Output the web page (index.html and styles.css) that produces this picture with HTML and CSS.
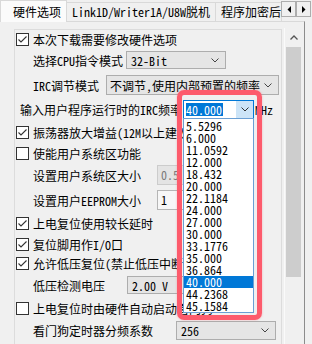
FILE: index.html
```html
<!DOCTYPE html>
<html>
<head>
    <meta charset="utf-8">
    <title>硬件选项</title>
    <link rel="stylesheet" href="styles.css">
</head>
<body>
  <div class="tabs">
    <div class="tab active">硬件选项</div>
    <div class="tab t2">Link1D/Writer1A/U8W脱机</div>
    <div class="tab t3">程序加密后</div>
    <div class="tab-arrows">
      <span class="arr"><svg width="4" height="7"><polygon points="4,0 4,7 0.5,3.5" fill="#000"/></svg></span>
      <span class="arr"><svg width="4" height="7"><polygon points="0,0 0,7 3.5,3.5" fill="#000"/></svg></span>
    </div>
  </div>

  <div class="panel">
    <div class="content">
      <div class="group">
        <div class="row h18">
          <span class="cb"><svg width="13" height="13"><rect x="0.5" y="0.5" width="12" height="12" fill="#fff" stroke="#333"/><polyline points="2.5,6.5 5,9 10.5,3.5" fill="none" stroke="#333" stroke-width="1.1"/></svg></span>本次下载需要修改硬件选项
        </div>
        <div class="row h24 ind">
          <span class="lbl w93">选择CPU指令模式</span>
          <span class="sel cpu">32-Bit<svg class="chev" width="8" height="5"><polyline points="0.5,0.5 4,4 7.5,0.5" fill="none" stroke="#444"/></svg></span>
        </div>
        <div class="row h26 ind">
          <span class="lbl w73">IRC调节模式</span>
          <span class="sel irc">不调节,使用内部预置的频率<svg class="chev" width="8" height="5"><polyline points="0.5,0.5 4,4 7.5,0.5" fill="none" stroke="#444"/></svg></span>
        </div>
        <div class="row h22 ind2">
          <span class="lbl w163">输入用户程序运行时的IRC频率</span>
          <span class="combo"><span class="hl">40.000</span><span class="combo-btn"><svg width="8" height="5"><polyline points="0.5,0.5 4,4 7.5,0.5" fill="none" stroke="#333"/></svg></span></span>
          <span class="unit">MHz</span>
        </div>
        <div class="row h24">
          <span class="cb"><svg width="13" height="13"><rect x="0.5" y="0.5" width="12" height="12" fill="#fff" stroke="#333"/><polyline points="2.5,6.5 5,9 10.5,3.5" fill="none" stroke="#333" stroke-width="1.1"/></svg></span>振荡器放大增益(12M以上建议选择)
        </div>
        <div class="row h18">
          <span class="cb"><svg width="13" height="13"><rect x="0.5" y="0.5" width="12" height="12" fill="#fff" stroke="#333"/></svg></span>使能用户系统区功能
        </div>
        <div class="row h26 ind">
          <span class="lbl w124">设置用户系统区大小</span>
          <span class="field off">0.5</span>
        </div>
        <div class="row h24 ind">
          <span class="lbl w124">设置用户EEPROM大小</span>
          <span class="field">1</span>
        </div>
        <div class="row h23">
          <span class="cb"><svg width="13" height="13"><rect x="0.5" y="0.5" width="12" height="12" fill="#fff" stroke="#333"/><polyline points="2.5,6.5 5,9 10.5,3.5" fill="none" stroke="#333" stroke-width="1.1"/></svg></span>上电复位使用较长延时
        </div>
        <div class="row h18">
          <span class="cb"><svg width="13" height="13"><rect x="0.5" y="0.5" width="12" height="12" fill="#fff" stroke="#333"/><polyline points="2.5,6.5 5,9 10.5,3.5" fill="none" stroke="#333" stroke-width="1.1"/></svg></span>复位脚用作I/O口
        </div>
        <div class="row h20">
          <span class="cb"><svg width="13" height="13"><rect x="0.5" y="0.5" width="12" height="12" fill="#fff" stroke="#333"/><polyline points="2.5,6.5 5,9 10.5,3.5" fill="none" stroke="#333" stroke-width="1.1"/></svg></span>允许低压复位(禁止低压中断)
        </div>
        <div class="row h24 ind">
          <span class="lbl w94">低压检测电压</span>
          <span class="sel lvd">2.00 V<svg class="chev" width="8" height="5"><polyline points="0.5,0.5 4,4 7.5,0.5" fill="none" stroke="#444"/></svg></span>
        </div>
        <div class="row h23">
          <span class="cb"><svg width="13" height="13"><rect x="0.5" y="0.5" width="12" height="12" fill="#fff" stroke="#333"/></svg></span>上电复位时由硬件自动启动看门狗
        </div>
        <div class="row h20 ind">
          <span class="lbl w143">看门狗定时器分频系数</span>
          <span class="sel wdt">256<svg class="chev" width="8" height="5"><polyline points="0.5,0.5 4,4 7.5,0.5" fill="none" stroke="#444"/></svg></span>
        </div>
      </div>
    </div>
    <div class="scrollbar">
      <div class="sb-up"><svg width="8" height="5"><polyline points="0.5,4.5 4,1 7.5,4.5" fill="none" stroke="#555" stroke-width="1.3"/></svg></div>
      <div class="sb-thumb"></div>
    </div>
  </div>

  <!-- opened dropdown of the IRC frequency box -->
  <div class="droplist">
    <div class="item">5.5296</div>
    <div class="item">6.000</div>
    <div class="item">11.0592</div>
    <div class="item">12.000</div>
    <div class="item">18.432</div>
    <div class="item">20.000</div>
    <div class="item">22.1184</div>
    <div class="item">24.000</div>
    <div class="item">27.000</div>
    <div class="item">30.000</div>
    <div class="item">33.1776</div>
    <div class="item">35.000</div>
    <div class="item">36.864</div>
    <div class="item picked">40.000</div>
    <div class="item">44.2368</div>
    <div class="item">45.1584</div>
  </div>
  <div class="mark"></div>
</body>
</html>
```

FILE: styles.css
```css
body {
    margin: 0;
    width: 312px;
    height: 344px;
    overflow: hidden;
    position: relative;
    background: #f0f0f0;
    font-family: "Noto Sans Mono CJK SC", "Noto Sans CJK SC", sans-serif;
    font-size: 12px;
    color: #000;
}

/* tab strip */
.tabs {
    display: flex;
    height: 21px;
    position: relative;
}

.tab {
    box-sizing: border-box;
    height: 19px;
    margin-top: 2px;
    border: 1px solid #d9d9d9;
    border-bottom: none;
    line-height: 18px;
    white-space: nowrap;
    overflow: hidden;
    background: #f0f0f0;
}

.tab.active {
    width: 67px;
    height: 22px;
    margin-top: 0;
    padding-left: 12px;
    line-height: 22px;
    background: #fbfbfb;
    position: relative;
    z-index: 1;
}

.tab.t2 {
    width: 149px;
    padding-left: 5px;
    border-left: none;
}

.tab.t3 {
    width: 66px;
    padding-left: 5px;
    border-left: none;
}

.tab-arrows {
    position: absolute;
    right: 1px;
    top: 1px;
    display: flex;
}

.arr {
    box-sizing: border-box;
    width: 15px;
    height: 16px;
    border: 1px solid #adadad;
    background: #f0f0f0;
    display: flex;
    align-items: center;
    justify-content: center;
}

/* page */
.panel {
    display: flex;
    width: 305px;
    height: 323px;
    box-sizing: border-box;
    border-top: 1px solid #d9d9d9;
    border-right: 1px solid #8c8c8c;
}

.content {
    width: 284px;
    padding-top: 7px;
    flex: none;
}

.group {
    box-sizing: border-box;
    width: 268px;
    height: 330px;
    margin-left: 14px;
    padding-left: 1px;
    border: 1px solid #dcdcdc;
    overflow: hidden;
}

.row {
    display: flex;
    align-items: center;
    white-space: nowrap;
}

.h18 { height: 18px; }
.h20 { height: 20px; }
.h22 { height: 22px; }
.h23 { height: 23px; }
.h24 { height: 24px; }
.h26 { height: 26px; }

.ind { padding-left: 17px; }
.ind2 { padding-left: 4px; }

.cb {
    width: 13px;
    height: 13px;
    margin-right: 4px;
    flex: none;
    display: flex;
}

.lbl { flex: none; }
.w73 { width: 73px; }
.w93 { width: 93px; }
.w94 { width: 94px; }
.w124 { width: 124px; }
.w143 { width: 143px; }
.w163 { width: 163px; }

.sel {
    box-sizing: border-box;
    display: flex;
    align-items: center;
    justify-content: space-between;
    padding: 0 6px 0 4px;
    background: #e5e5e5;
    border: 1px solid #adadad;
    flex: none;
}

.sel.cpu { width: 100px; height: 18px; }
.sel.irc { width: 173px; height: 20px; padding-left: 3px; }
.sel.lvd { width: 80px; height: 18px; }
.sel.wdt { width: 100px; height: 19px; }

.combo {
    box-sizing: border-box;
    width: 71px;
    height: 19px;
    display: flex;
    align-items: center;
    padding-left: 2px;
    background: #fff;
    border: 1px solid #0078d7;
    flex: none;
}

.hl {
    background: #0078d7;
    color: #fff;
    line-height: 13px;
    padding-right: 1px;
}

.combo-btn {
    margin-left: auto;
    width: 17px;
    height: 17px;
    display: flex;
    align-items: center;
    justify-content: center;
    background: #cce4f7;
}

.unit { margin-left: 1px; }

.field {
    box-sizing: border-box;
    width: 70px;
    height: 20px;
    padding-left: 3px;
    line-height: 18px;
    border: 1px solid #b5b5b5;
    background: #f7f7f7;
    flex: none;
}

.field.off {
    background: #e4e4e4;
    border-color: #cccccc;
    color: #7a7a7a;
}

/* scrollbar of the page */
.scrollbar {
    width: 17px;
    margin-top: 6px;
    border-left: 1px solid #fafafa;
    background: #f0f0f0;
    flex: none;
}

.sb-up {
    height: 19px;
    display: flex;
    align-items: center;
    justify-content: center;
}

.sb-thumb {
    height: 230px;
    margin: 0 1px;
    background: #cdcdcd;
}

/* overlays */
.droplist {
    position: absolute;
    left: 183px;
    top: 118px;
    width: 71px;
    box-sizing: border-box;
    padding-top: 1px;
    background: #fff;
    border: 1px solid #6a9fd4;
}

.item {
    height: 12px;
    line-height: 12px;
    padding-left: 2px;
}

.item.picked {
    background: #0078d7;
    color: #fff;
}

.mark {
    position: absolute;
    left: 177px;
    top: 90px;
    width: 85px;
    height: 230px;
    box-sizing: border-box;
    border: 5px solid #fd5b6c;
    border-radius: 7px;
    box-shadow: 0 0 2px rgba(253, 91, 108, 0.5);
}
```
